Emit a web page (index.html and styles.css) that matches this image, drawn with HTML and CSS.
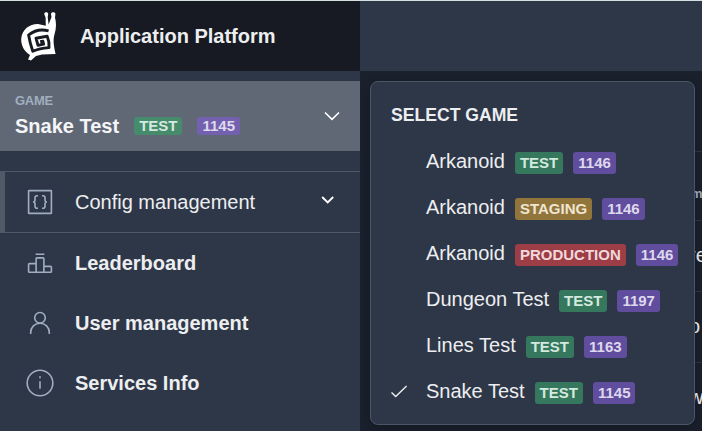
FILE: index.html
```html
<!DOCTYPE html>
<html lang="en">
<head>
<meta charset="utf-8">
<title>Application Platform</title>
<link rel="stylesheet" href="styles.css">
</head>
<body>
<div class="app">
  <aside class="sidebar">
    <header class="brand">
      <svg class="logo" width="36" height="50" viewBox="0 0 36 50">
        <path fill="#fff" d="M23.2 3 C23.2 0.6 27.2 0.6 27.2 3 L26.7 6 L27.6 13.5 L30.5 6 L30 3 C30 .6 34.6 .6 34.4 3.2 L34 6.5 C35.4 12 35.4 17 33.6 23 C32 28 32.4 34 34.6 43 L21 43.6 L15 45 L10 49.4 L7 48.6 L9 44 C3 40.5 0 34 0.2 28 C1 18 9 12.8 17 13 L24.8 14.8 L24.6 6.5 Z"/>
        <path fill="none" stroke="#171a22" stroke-width="2.9" stroke-linejoin="round" d="M27.6 19.8 C20 17.8 13 19.5 7.6 24 C8.5 29.5 9.8 34.5 11.8 40.3 C17.5 37.6 22.5 37 28 36.6 C28.5 32.5 27.8 29 26.2 25.2 L15 27.2 L17 34.4 L22.6 33.2 L21.9 30.3 L19.2 30.8"/>
      </svg>
      <h1>Application Platform</h1>
    </header>
    <button class="current">
      <span>
        <small>GAME</small>
        <span class="current-name"><span>Snake Test</span> <b class="badge green">TEST</b> <b class="badge purple">1145</b></span>
      </span>
      <svg width="20" height="20" viewBox="0 0 20 20" fill="none" stroke="#fff" stroke-width="1.6"><path d="M3 6.5 10 13.3 17 6.5"/></svg>
    </button>
    <nav>
      <a class="item open">
        <svg class="icon" width="30" height="30" viewBox="0 0 30 30"><rect x="3.6" y="3.6" width="22.8" height="22.8" rx=".5"/><path d="M13 8.8h-1q-2 0-2 2v2.2q0 2-2 2 2 0 2 2v2.2q0 2 2 2h1M17 8.8h1q2 0 2 2v2.2q0 2 2 2-2 0-2 2v2.2q0 2-2 2h-1"/></svg>
        <span>Config management</span>
        <svg class="arrow" width="16" height="16" viewBox="0 0 16 16" fill="none" stroke="#fff" stroke-width="1.9"><path d="M2.2 5 7.7 10.4 13.2 5"/></svg>
      </a>
      <a class="item">
        <svg class="icon" width="30" height="30" viewBox="0 0 30 30"><path d="M10.6 6.2h8.8M11.1 24.3V10.8q0-.9.9-.9h6q.9 0 .9.9v13.5M11.1 15.6H4.5q-.9 0-.9.9v6.9q0 .9.9.9h21q.9 0 .9-.9v-4.1q0-.9-.9-.9h-6.6"/></svg>
        <span>Leaderboard</span>
      </a>
      <a class="item">
        <svg class="icon" width="30" height="30" viewBox="0 0 30 30"><circle cx="15" cy="9.8" r="5.3"/><path d="M5.7 26v-1.5a9.3 9.3 0 0 1 18.6 0V26"/></svg>
        <span>User management</span>
      </a>
      <a class="item">
        <svg class="icon" width="30" height="30" viewBox="0 0 30 30"><circle cx="15" cy="15" r="12.8"/><path d="M15 13.2v7.6M15 8.3v1.9"/></svg>
        <span>Services Info</span>
      </a>
    </nav>
  </aside>
  <main>
    <div class="topbar"></div>
    <div class="toolbar"></div>
    <div class="row head">m</div>
    <div class="row">re</div>
    <div class="row">o</div>
    <div class="row last">w</div>
    <section class="menu">
      <h2>SELECT GAME</h2>
      <div class="option"><i></i><span>Arkanoid</span><b class="badge green">TEST</b><b class="badge purple">1146</b></div>
      <div class="option"><i></i><span>Arkanoid</span><b class="badge yellow">STAGING</b><b class="badge purple">1146</b></div>
      <div class="option"><i></i><span>Arkanoid</span><b class="badge red">PRODUCTION</b><b class="badge purple">1146</b></div>
      <div class="option"><i></i><span>Dungeon Test</span><b class="badge green">TEST</b><b class="badge purple">1197</b></div>
      <div class="option"><i></i><span>Lines Test</span><b class="badge green">TEST</b><b class="badge purple">1163</b></div>
      <div class="option"><i><svg width="18" height="16" viewBox="0 0 18 16" fill="none" stroke="#edf0f0" stroke-width="1.4"><path d="M1.5 7.4 5.7 11.6 16.6 1"/></svg></i><span>Snake Test</span><b class="badge green">TEST</b><b class="badge purple">1145</b></div>
    </section>
  </main>
</div>
</body>
</html>
```
FILE: styles.css
```css
* { box-sizing: border-box; }
body {
  margin: 0;
  height: 431px;
  overflow: hidden;
  border-top: 1px solid #d5dfdf;
  background: #1a202c;
  color: #edeef0;
  font-family: "Liberation Sans", Arial, sans-serif;
  font-size: 20px;
}
.app { display: grid; grid-template-columns: 360px 342px; height: 430px; }
.sidebar { background: #2d3748; }
.brand { display: flex; align-items: center; gap: 23px; height: 70px; padding-left: 21px; background: #171a22; }
.logo { display: block; }
h1 { margin: 0; font-size: 20px; line-height: 24px; }
.current {
  display: flex;
  align-items: center;
  justify-content: space-between;
  width: 100%;
  height: 70px;
  margin: 10px 0 20px;
  padding: 0 18px 0 15px;
  border: 0;
  background: #616875;
  color: #f5f6f8;
  font: bold 20px/24px "Liberation Sans", Arial, sans-serif;
  text-align: left;
}
.current small { display: block; padding-top: 2px; color: #a0aec0; font-size: 13px; line-height: 15px; letter-spacing: -.3px; }
.current-name { display: flex; align-items: center; gap: 15px; height: 34px; }
.current-name span { padding-top: 2px; }
.badge { display: block; height: 22px; padding: 0 5px; border-radius: 3px; font-size: 15px; line-height: 22px; }
.current .badge { height: 18px; margin-top: 2px; line-height: 18px; }
.green { background: #36785d; color: #d4e9df; }
.purple { background: #614d9e; color: #ded8ed; }
.yellow { background: #92753a; color: #eee5d2; }
.red { background: #9d3d46; color: #f0d8dc; }
.current .green { background: #468b6c; }
.current .purple { background: #7360ae; }
.item { display: flex; align-items: center; gap: 20px; height: 60px; padding-left: 25px; font-weight: bold; }
.item.open { height: 62px; padding: 0 24px 0 20px; border: solid #505966; border-width: 1px 0 1px 5px; font-weight: normal; }
.icon { fill: none; stroke: #a0aec0; stroke-width: 1.6; }
.arrow { margin-left: auto; margin-top: -4px; }
main { position: relative; overflow: hidden; }
.topbar { height: 70px; background: #2d3748; }
.toolbar { height: 81px; margin-left: 20px; border-bottom: 1px solid #2d3440; }
.row { display: flex; align-items: center; height: 71px; margin-left: 20px; padding: 0 0 2px 309px; border-bottom: 1px solid #2d3440; }
.head { height: 69px; padding: 14px 0 0 311px; color: #a0aec0; font-size: 13px; font-weight: bold; }
.last { border: 0; }
.menu {
  position: absolute;
  top: 80px;
  left: 10px;
  width: 325px;
  height: 344px;
  padding: 21px 15px 0 15px;
  border: 1px solid #4a5565;
  border-radius: 8px;
  background: #2d3748;
  box-shadow: 0 4px 12px rgba(0, 0, 0, .2);
}
h2 { margin: 0 0 13px 5px; font-size: 17.6px; line-height: 24px; }
.option { display: flex; align-items: center; gap: 10px; height: 46px; line-height: 24px; white-space: nowrap; }
.option i { display: flex; width: 30px; padding-left: 4px; }
.option span { padding-bottom: 4px; }
```
